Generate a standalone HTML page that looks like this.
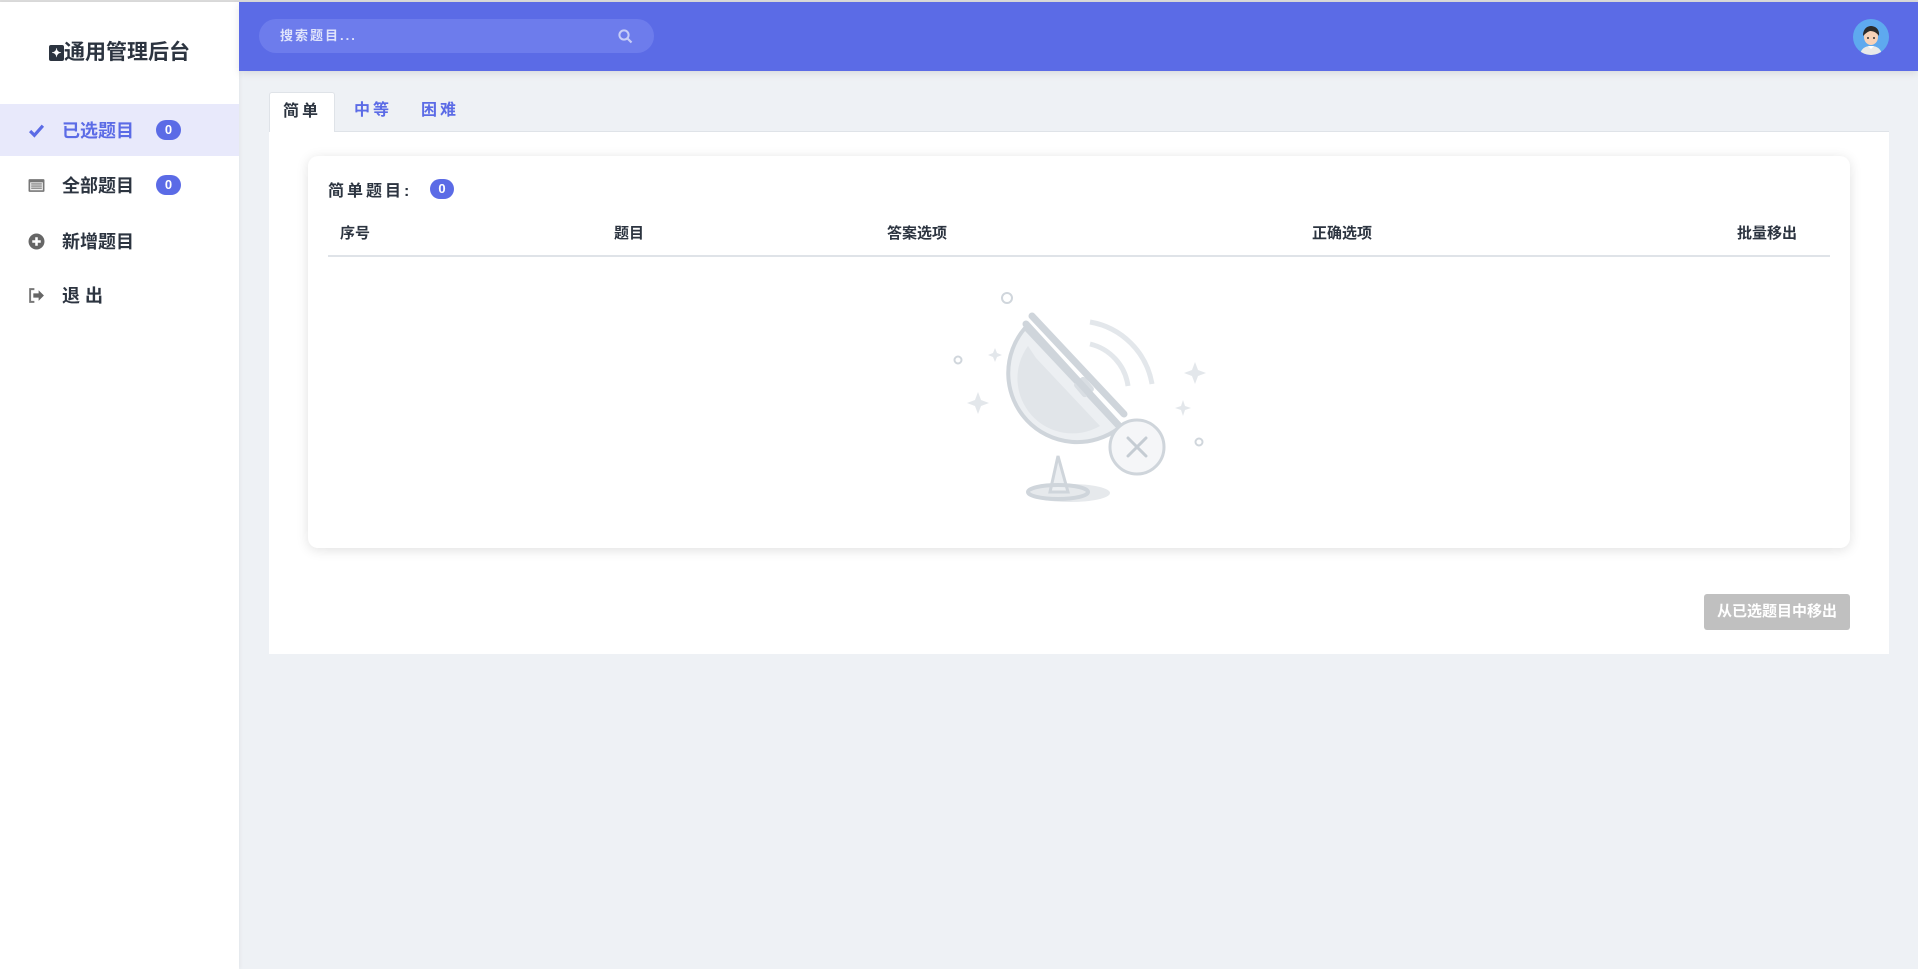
<!DOCTYPE html>
<html><head><meta charset="utf-8"><style>
*{margin:0;padding:0;box-sizing:border-box}
body{width:1918px;height:969px;overflow:hidden;background:#eef1f5;font-family:"Liberation Sans","Noto Sans CJK SC",sans-serif;position:relative;color:#2c3440}
.top{position:absolute;left:0;top:0;width:1918px;height:2px;background:#dcdcdc}
.side{position:absolute;left:0;top:2px;width:239px;height:967px;background:#fff;box-shadow:1px 0 4px rgba(0,0,0,.05)}
.logo{position:absolute;left:0;width:239px;top:34px;text-align:center;font-size:21px;font-weight:bold;color:#2c3440}
.item{position:absolute;left:0;width:239px;height:52px;display:flex;align-items:center;font-size:18px;font-weight:bold;color:#2c3440}
.item .ic{position:absolute;left:28px;top:18px;width:17px;height:17px}
.item .t{position:absolute;left:62px}
.badge{display:inline-block;background:#5b6be6;color:#fff;font-size:13px;font-weight:bold;border-radius:10px;text-align:center;line-height:20px;height:20px;width:25px}
.item .badge{position:absolute;left:156px;top:16px}
.act{background:#e8e9fb;color:#5b6be6}
.head{position:absolute;left:239px;top:2px;width:1679px;height:69px;background:#5b6be6;box-shadow:0 2px 8px rgba(0,0,0,.1)}
.search{position:absolute;left:20px;top:17px;width:395px;height:34px;border-radius:17px;background:#6d7cec;color:#dfe3fb;font-size:13px;font-weight:bold;letter-spacing:2px;line-height:34px;padding-left:21px}
.av{position:absolute;left:1614px;top:17px;width:36px;height:36px;border-radius:50%;background:#5ea9ef;overflow:hidden}
.tab{position:absolute;top:92px;height:40px;font-size:16px;font-weight:bold;letter-spacing:3px;line-height:38px}
.panel{position:absolute;left:269px;top:131px;width:1620px;height:523px;background:#fff}
.card{position:absolute;left:308px;top:156px;width:1542px;height:392px;background:#fff;border-radius:10px;box-shadow:0 2px 12px rgba(0,0,0,.12)}
.th{position:absolute;top:222px;font-size:15px;font-weight:bold;color:#2c3440}
.btn{position:absolute;left:1704px;top:594px;width:146px;height:36px;background:#c0c0c0;border-radius:3px;color:#fff;font-size:15px;font-weight:bold;text-align:center;line-height:36px}
</style></head><body>
<div class="top"></div>
<div class="side">
 <div class="logo"><span style="display:inline-block;width:15px;height:16px;background:#2c3440;border-radius:2px;color:#fff;font-size:12px;line-height:16px;vertical-align:2px">✦</span>通用管理后台</div>
</div>
<div class="item act" style="top:104px"><svg class="ic" viewBox="0 0 16 16"><path d="M2 8.5l4 4 8-9" stroke="#5b6be6" stroke-width="3" fill="none"/></svg><span class="t">已选题目</span><span class="badge">0</span></div>
<div class="item" style="top:159px"><svg class="ic" viewBox="0 0 16 16"><rect x="0.5" y="2" width="15" height="12" rx="1" fill="#777"/><rect x="2" y="5" width="12" height="7.5" fill="#eee"/><path d="M3 6.5h10M3 8.5h10M3 10.5h10" stroke="#777" stroke-width="1"/></svg><span class="t">全部题目</span><span class="badge">0</span></div>
<div class="item" style="top:215px"><svg class="ic" viewBox="0 0 16 16"><circle cx="8" cy="8" r="7.5" fill="#666"/><path d="M8 4v8M4 8h8" stroke="#fff" stroke-width="2.4"/></svg><span class="t">新增题目</span></div>
<div class="item" style="top:269px"><svg class="ic" viewBox="0 0 16 16"><path d="M6 2H2v12h4" stroke="#777" stroke-width="1.8" fill="none"/><path d="M5 6h5V3l5 5-5 5v-3H5z" fill="#666"/></svg><span class="t" style="letter-spacing:5px">退出</span></div>
<div class="head">
 <div class="search">搜索题目...<svg style="position:absolute;left:359px;top:10px" width="15" height="15" viewBox="0 0 15 15"><circle cx="6" cy="6" r="4.6" stroke="#c7cdf7" stroke-width="2" fill="none"/><path d="M9.5 9.5l4 4" stroke="#c7cdf7" stroke-width="2.2"/></svg></div>
 <div class="av"><svg width="36" height="36" viewBox="0 0 36 36"><path d="M7 36c1-7 6-9 11-9s10 2 11 9z" fill="#e9e9e9"/><path d="M15 27l3 3 3-3z" fill="#fff"/><ellipse cx="18" cy="18" rx="7" ry="8" fill="#f7d2b8"/><path d="M10 17c0-8 5-10 8-10s9 2 8 10c-2-3-5-5-9-5-3 1-5 3-7 5z" fill="#2b2b2b"/><circle cx="15" cy="19" r="1" fill="#333"/><circle cx="21" cy="19" r="1" fill="#333"/></svg></div>
</div>
<div class="panel"></div>
<div class="tab" style="left:269px;width:66px;background:#fff;border:1px solid #dfe3e8;border-bottom:none;border-radius:3px 3px 0 0;text-align:center;color:#2c3440">简单</div>
<div class="tab" style="left:354px;color:#5b6be6">中等</div>
<div class="tab" style="left:421px;color:#5b6be6">困难</div>
<div style="position:absolute;left:335px;top:131px;width:1554px;height:1px;background:#dfe3e8"></div>
<div class="card"></div>
<div style="position:absolute;left:328px;top:177px;font-size:16px;font-weight:bold;letter-spacing:3px;color:#2c3440">简单题目:</div>
<span class="badge" style="position:absolute;left:430px;top:179px;width:24px">0</span>
<div class="th" style="left:340px">序号</div>
<div class="th" style="left:614px">题目</div>
<div class="th" style="left:887px">答案选项</div>
<div class="th" style="left:1312px">正确选项</div>
<div class="th" style="left:1737px">批量移出</div>
<div style="position:absolute;left:328px;top:255px;width:1502px;height:2px;background:#dfe3e8"></div>
<svg style="position:absolute;left:940px;top:280px" width="270" height="230" viewBox="0 0 270 230">
 <g fill="none" stroke="#d0d6dc" stroke-width="2"><circle cx="67" cy="18" r="5"/><circle cx="18" cy="80" r="3.5"/><circle cx="259" cy="162" r="3.5"/></g>
 <g fill="#e3e7eb"><path d="M38 112l3 8 8 3-8 3-3 8-3-8-8-3 8-3z"/><path d="M55 68l2 5 5 2-5 2-2 5-2-5-5-2 5-2z"/><path d="M255 82l3 8 8 3-8 3-3 8-3-8-8-3 8-3z"/><path d="M243 120l2 6 6 2-6 2-2 6-2-6-6-2 6-2z"/></g>
 <path d="M150 42a76 76 0 0 1 62 62" stroke="#e3e7eb" stroke-width="5" fill="none"/>
 <path d="M150 64a50 50 0 0 1 38 42" stroke="#e3e7eb" stroke-width="5" fill="none"/>
 <ellipse cx="130" cy="213" rx="40" ry="9" fill="#e6e9ec"/>
 <path d="M118 176l-8 36h18z" fill="#eceff2" stroke="#cfd5db" stroke-width="3"/>
 <ellipse cx="118" cy="212" rx="30" ry="7" fill="none" stroke="#cfd5db" stroke-width="4"/>
 <path d="M85 48A69 69 0 0 0 179 148z" fill="#eceff2" stroke="#cfd5db" stroke-width="4"/>
 <path d="M88 66A55 55 0 0 0 160 146L96 78z" fill="#e1e5e9"/>
 <rect x="137" y="98" width="14" height="18" rx="3" fill="#d9dee3" transform="rotate(-40 144 107)"/>
 <path d="M86 44l95 104M92 36l92 98" stroke="#cfd5db" stroke-width="7" stroke-linecap="round"/>
 <circle cx="197" cy="167" r="27" fill="#f5f6f8" stroke="#cfd5db" stroke-width="3"/>
 <path d="M188 158l18 18M206 158l-18 18" stroke="#c5ccd3" stroke-width="3" stroke-linecap="round"/>
</svg>
<div class="btn">从已选题目中移出</div>
</body></html>
